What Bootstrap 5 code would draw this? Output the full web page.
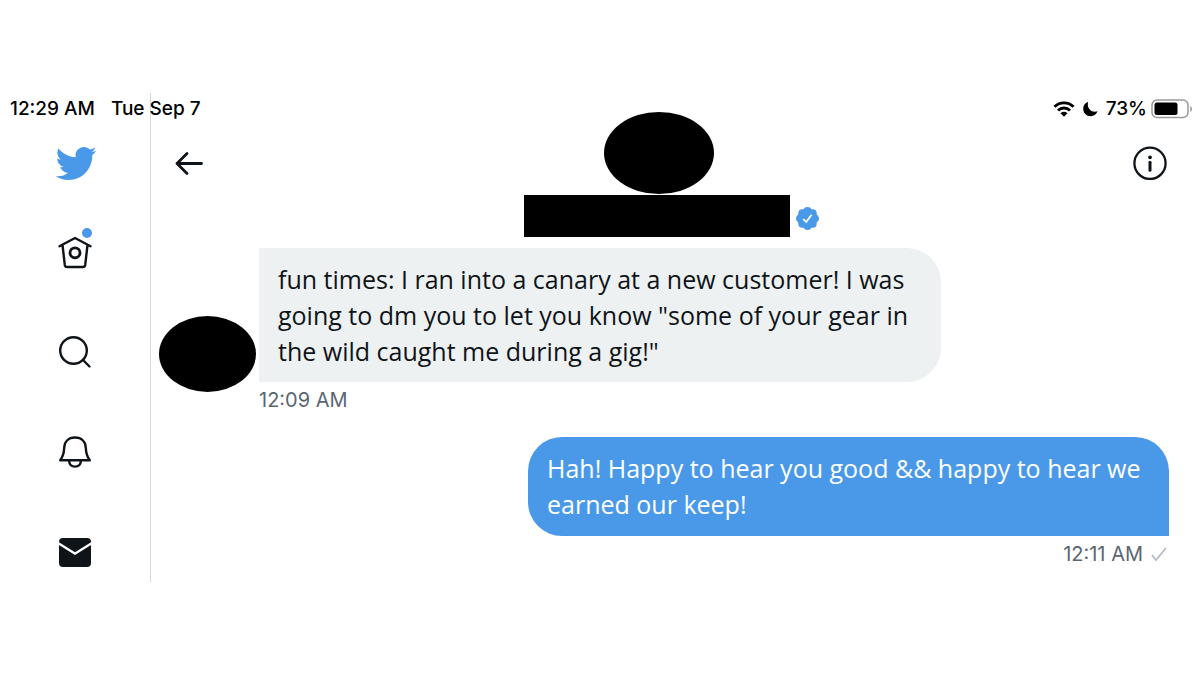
<!DOCTYPE html>
<html lang="en">
<head>
<meta charset="utf-8">
<meta name="viewport" content="width=device-width, initial-scale=1">
<title>Messages</title>
<link href="https://cdn.jsdelivr.net/npm/bootstrap@5.3.0/dist/css/bootstrap.min.css" rel="stylesheet">
<style>
  :root { --brand: #4a99e9; --ink: #0f1419; --muted: #5b6671; }
  body { background: #fff; color: var(--ink); font-family: "Open Sans", sans-serif; padding-top: 93px; }
  svg { display: block; }
  .status-bar { top: 0; left: 0; right: 0; height: 32px; padding: 0 7px 0 10px; color: #000; font: 500 19px/32px Inter, sans-serif; }
  .status-clock { gap: 16px; }
  .side-rail { width: 151px; padding: 50px 0 10px; border-right: 1px solid #d5dadd; }
  .side-rail a { height: 40px; color: var(--ink); }
  .side-rail .brand-link { color: var(--brand); margin-bottom: 49px; }
  .side-items { gap: 60px; }
  .unread-dot { width: 10px; height: 10px; top: -4px; right: 3px; background: var(--brand); }
  .chat-pane { min-width: 0; padding-top: 19px; }
  .chat-head { padding: 0 33px 0 24px; }
  .icon-button { color: var(--ink); margin-top: 34px; }
  .contact { gap: 6px; }
  .hidden-face { background: #000; border-radius: 50%; }
  .face-large { width: 110px; height: 82px; margin-left: 4px; }
  .face-small { width: 97px; height: 76px; margin: 68px 3px 0 0; }
  .hidden-name { width: 266px; height: 42px; margin-top: 1px; background: #000; }
  .verified { margin-bottom: 7px; color: var(--brand); }
  .thread { padding: 11px 31px 0 8px; }
  .bubble { padding: 13px 0 13px 19px; font-size: 25px; line-height: 36px; border-radius: 34px; }
  .bubble-in { background: #edf1f2; border-top-left-radius: 0; border-bottom-left-radius: 0; }
  .bubble-out { padding-bottom: 14px; background: var(--brand); color: #fff; border-bottom-right-radius: 0; }
  .from-them { width: 682px; max-width: 100%; }
  .from-me { width: 641px; max-width: 100%; margin-top: 25px; }
  .stamp { margin-top: 6px; color: var(--muted); font: 400 20px/24px Inter, sans-serif; }
</style>
</head>
<body>
<div class="position-relative d-flex">
  <nav class="side-rail d-flex flex-column align-items-center flex-shrink-0" aria-label="Main">
    <a class="brand-link d-flex align-items-center" href="#" aria-label="Twitter">
      <svg width="43" height="43" viewBox="0 0 24 24" fill="currentColor"><path d="M23.643 4.937c-.835.37-1.732.62-2.675.733.962-.576 1.7-1.49 2.048-2.578-.9.534-1.897.922-2.958 1.13-.85-.904-2.06-1.47-3.4-1.47-2.572 0-4.658 2.086-4.658 4.66 0 .364.042.718.12 1.06-3.873-.195-7.304-2.05-9.602-4.868-.4.69-.63 1.49-.63 2.342 0 1.616.823 3.043 2.072 3.878-.764-.025-1.482-.234-2.11-.583v.06c0 2.257 1.605 4.14 3.737 4.568-.392.106-.803.162-1.227.162-.3 0-.593-.028-.877-.082.593 1.85 2.313 3.198 4.352 3.234-1.595 1.25-3.604 1.995-5.786 1.995-.376 0-.747-.022-1.112-.065 2.062 1.323 4.51 2.093 7.14 2.093 8.57 0 13.255-7.098 13.255-13.254 0-.2-.005-.402-.014-.602.91-.658 1.7-1.477 2.323-2.41z"/></svg>
    </a>
    <div class="side-items d-flex flex-column">
      <a class="position-relative" href="#" aria-label="Home">
        <svg width="40" height="40" viewBox="0 0 40 40" fill="none" stroke="currentColor" stroke-width="2.4" stroke-linecap="round" stroke-linejoin="round"><path d="M4.500 14.300 20 6l15.500 8.300M7.500 13l2.300 20q.3 2 2.200 2h16q1.900 0 2.200-2l2.300-20"/><circle cx="20" cy="20.800" r="5" stroke-width="2.800"/></svg>
        <span class="unread-dot position-absolute rounded-circle"></span>
      </a>
      <a href="#" aria-label="Explore">
        <svg width="40" height="40" viewBox="0 0 40 40" fill="none" stroke="currentColor" stroke-width="2.400" stroke-linecap="round"><circle cx="18.500" cy="18.500" r="13.300"/><path d="m28 28 6.500 6.500"/></svg>
      </a>
      <a href="#" aria-label="Notifications">
        <svg width="40" height="40" viewBox="0 0 40 40" fill="none" stroke="currentColor" stroke-width="2.400" stroke-linejoin="round"><path d="M5.200 28.300C8.700 24 9 21 9.200 15.800 9.500 9.500 13.500 5.500 20 5.500S30.500 9.500 30.800 15.800c.2 5.200.5 8.200 4 12.500zM14 28.500c.3 3.900 2.600 6.100 6 6.100s5.700-2.200 6-6.100"/></svg>
      </a>
      <a href="#" aria-label="Messages">
        <svg width="40" height="40" viewBox="0 0 40 40" fill="currentColor"><path d="M4 10.200Q4 6 8 6h24q4 0 4 4.200L20 20.300z"/><path d="M4 13v18q0 4 4 4h24q4 0 4-4V13L20 23z"/></svg>
      </a>
    </div>
  </nav>

  <main class="chat-pane flex-grow-1">
    <header class="chat-head d-flex justify-content-between align-items-start">
      <button type="button" class="icon-button btn p-0 border-0" aria-label="Back">
        <svg width="34" height="34" viewBox="0 0 34 34" fill="none" stroke="currentColor" stroke-width="2.800" stroke-linecap="round" stroke-linejoin="round"><path d="M26.500 17.500H2M12 7.500l-10 10 10 10"/></svg>
      </button>
      <div class="contact d-flex align-items-end">
        <div class="d-flex flex-column align-items-center">
          <div class="hidden-face face-large"></div>
          <div class="hidden-name"></div>
        </div>
        <svg class="verified" width="23" height="23" viewBox="0 0 24 24" role="img" aria-label="Verified"><g fill="currentColor"><circle cx="12" cy="12" r="10.200"/><circle cx="12" cy="4.300" r="4.200"/><circle cx="17.400" cy="6.600" r="4.200"/><circle cx="19.700" cy="12" r="4.200"/><circle cx="17.400" cy="17.400" r="4.200"/><circle cx="12" cy="19.700" r="4.200"/><circle cx="6.600" cy="17.400" r="4.200"/><circle cx="4.300" cy="12" r="4.200"/><circle cx="6.600" cy="6.600" r="4.200"/></g><path d="m7.600 12.600 3.100 3 5.500-7.500" fill="none" stroke="#fff" stroke-width="1.800"/></svg>
      </div>
      <button type="button" class="icon-button btn p-0 border-0" aria-label="Conversation info">
        <svg width="34" height="34" viewBox="0 0 34 34" fill="none" stroke="currentColor" stroke-width="2.300" stroke-linecap="round"><circle cx="17" cy="17.300" r="15.600"/><path d="M17 16.300v8" stroke-width="3"/><circle cx="17" cy="11.300" r="1.900" fill="currentColor" stroke="none"/></svg>
      </button>
    </header>

    <section class="thread d-flex flex-column" aria-label="Conversation">
      <div class="d-flex align-items-start">
        <div class="hidden-face face-small flex-shrink-0"></div>
        <div class="from-them">
          <div class="bubble bubble-in">fun times: I ran into a canary at a new customer! I was<br>going to dm you to let you know "some of your gear in<br>the wild caught me during a gig!"</div>
          <div class="stamp">12:09 AM</div>
        </div>
      </div>
      <div class="from-me align-self-end">
        <div class="bubble bubble-out">Hah! Happy to hear you good &amp;&amp; happy to hear we<br>earned our keep!</div>
        <div class="stamp d-flex justify-content-end align-items-center gap-2">12:11 AM
          <svg width="18" height="18" viewBox="0 0 18 18" fill="none" stroke="#b4bdc6" stroke-width="1.800" role="img" aria-label="Sent"><path d="m1 10 4 5 10-12"/></svg>
        </div>
      </div>
    </section>
  </main>

  <div class="status-bar position-absolute d-flex justify-content-between">
    <div class="status-clock d-flex"><span>12:29 AM</span><span>Tue Sep 7</span></div>
    <div class="d-flex align-items-center">
      <svg class="me-2" width="22" height="18" viewBox="0 0 22 18" fill="none" stroke="#000" stroke-width="2.900"><path d="M1.500 6.800a13.500 13.500 0 0 1 19 0M5 10.500a8.500 8.500 0 0 1 12 0"/><path d="M7.500 13.200a5 5 0 0 1 7 0L11 16.800z" fill="#000" stroke="none"/></svg>
      <svg class="me-2" width="15" height="16" viewBox="0 0 15 16"><path d="M5.200.8C1.800 2 .2 4.700.2 7.700c0 4.300 3.300 7.500 7.500 7.500 3 0 5.700-1.700 6.900-4.900C8.500 12.300 3.300 7.300 5.200.8z"/></svg>
      <span>73%</span>
      <svg class="ms-1" width="42" height="20" viewBox="0 0 42 20"><rect x="1" y="1" width="36" height="17.500" rx="5" fill="none" stroke="#999" stroke-width="1.500"/><rect x="3.500" y="3.500" width="23" height="12.500" rx="2.500"/><path d="M39.300 7v6c2.200-.8 2.200-5.200 0-6z" fill="#999"/></svg>
    </div>
  </div>
</div>
<script src="https://cdn.jsdelivr.net/npm/bootstrap@5.3.0/dist/js/bootstrap.bundle.min.js"></script>
</body>
</html>
